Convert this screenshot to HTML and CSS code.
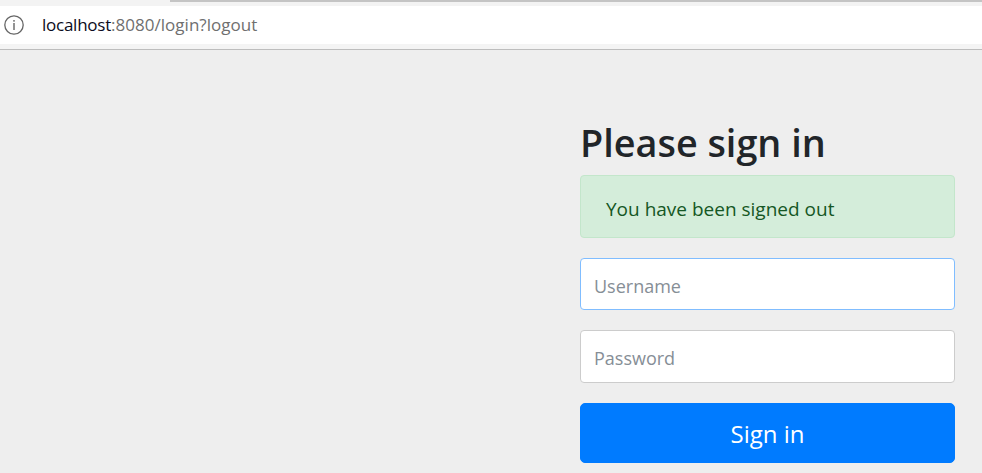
FILE: index.html
```html
<!DOCTYPE html>
<html lang="en">

<head>
    <meta charset="UTF-8">
    <title>Please sign in</title>
    <link rel="stylesheet" href="styles.css">
</head>

<body>
    <div class="top-strip">
        <div class="tab-line"></div>
    </div>
    <div class="address-bar">
        <svg class="info-icon" width="20" height="20" viewBox="0 0 20 20">
            <circle cx="10" cy="10" r="9.2" fill="none" stroke="#666" stroke-width="1.3" />
            <rect x="9.3" y="5" width="1.4" height="1.7" fill="#666" />
            <rect x="9.3" y="8" width="1.4" height="7" fill="#666" />
        </svg>
        <p class="url"><span class="host">localhost</span>:8080/login?logout</p>
    </div>
    <div class="bar-bottom"></div>

    <div class="page">
        <form class="signin">
            <h2 class="heading">Please sign in</h2>
            <div class="alert">You have been signed out</div>
            <input class="field focused" type="text" placeholder="Username">
            <input class="field password" type="password" placeholder="Password">
            <button class="btn" type="button">Sign in</button>
        </form>
    </div>
</body>

</html>
```

FILE: styles.css
```css
* {
    margin: 0;
    padding: 0;
    box-sizing: border-box;
}

html,
body {
    height: 473px;
    overflow: hidden;
}

body {
    background: #eeeeee;
    font-family: "Open Sans", "Noto Sans", sans-serif;
    color: #212529;
}

.top-strip {
    height: 6px;
    background: #f3f3f3;
}

.tab-line {
    height: 2px;
    margin-left: 170px;
    background: #c4c4c4;
}

.address-bar {
    height: 38px;
    background: #fff;
    display: flex;
    align-items: center;
    padding-left: 4px;
}

.info-icon {
    flex: none;
}

.url {
    margin-left: 18px;
    margin-bottom: 2px;
    font-size: 17px;
    letter-spacing: 0.03px;
    color: #6f6f6f;
}

.host {
    letter-spacing: -0.25px;
    color: #0b0b20;
}

.bar-bottom {
    height: 6px;
    background: #f4f4f4;
    border-bottom: 1px solid #bdbdbd;
}

.page {
    padding-left: 580px;
}

.signin {
    width: 375px;
    display: flex;
    flex-direction: column;
}

.heading {
    margin-top: 67px;
    height: 58px;
    font-size: 37.8px;
    line-height: 52px;
    font-weight: 600;
}

.alert {
    height: 63px;
    padding-left: 25px;
    line-height: 66px;
    font-size: 19px;
    color: #155724;
    background: #d4edda;
    border: 1px solid #c3e6cb;
    border-radius: 4px;
    margin-bottom: 20px;
}

.field {
    height: 53px;
    padding: 2px 13px 0;
    font-family: inherit;
    font-size: 18px;
    background: #fff;
    border: 1px solid #ccc;
    border-radius: 4px;
    margin-bottom: 20px;
}

.field::placeholder {
    color: #868e96;
    opacity: 1;
}

.focused {
    height: 52px;
    padding-top: 4px;
    border-color: #80bdff;
}

.btn {
    height: 60px;
    font-family: inherit;
    font-size: 24px;
    color: #fff;
    background: #007bff;
    border: 1px solid #007bff;
    border-radius: 5px;
}
```
